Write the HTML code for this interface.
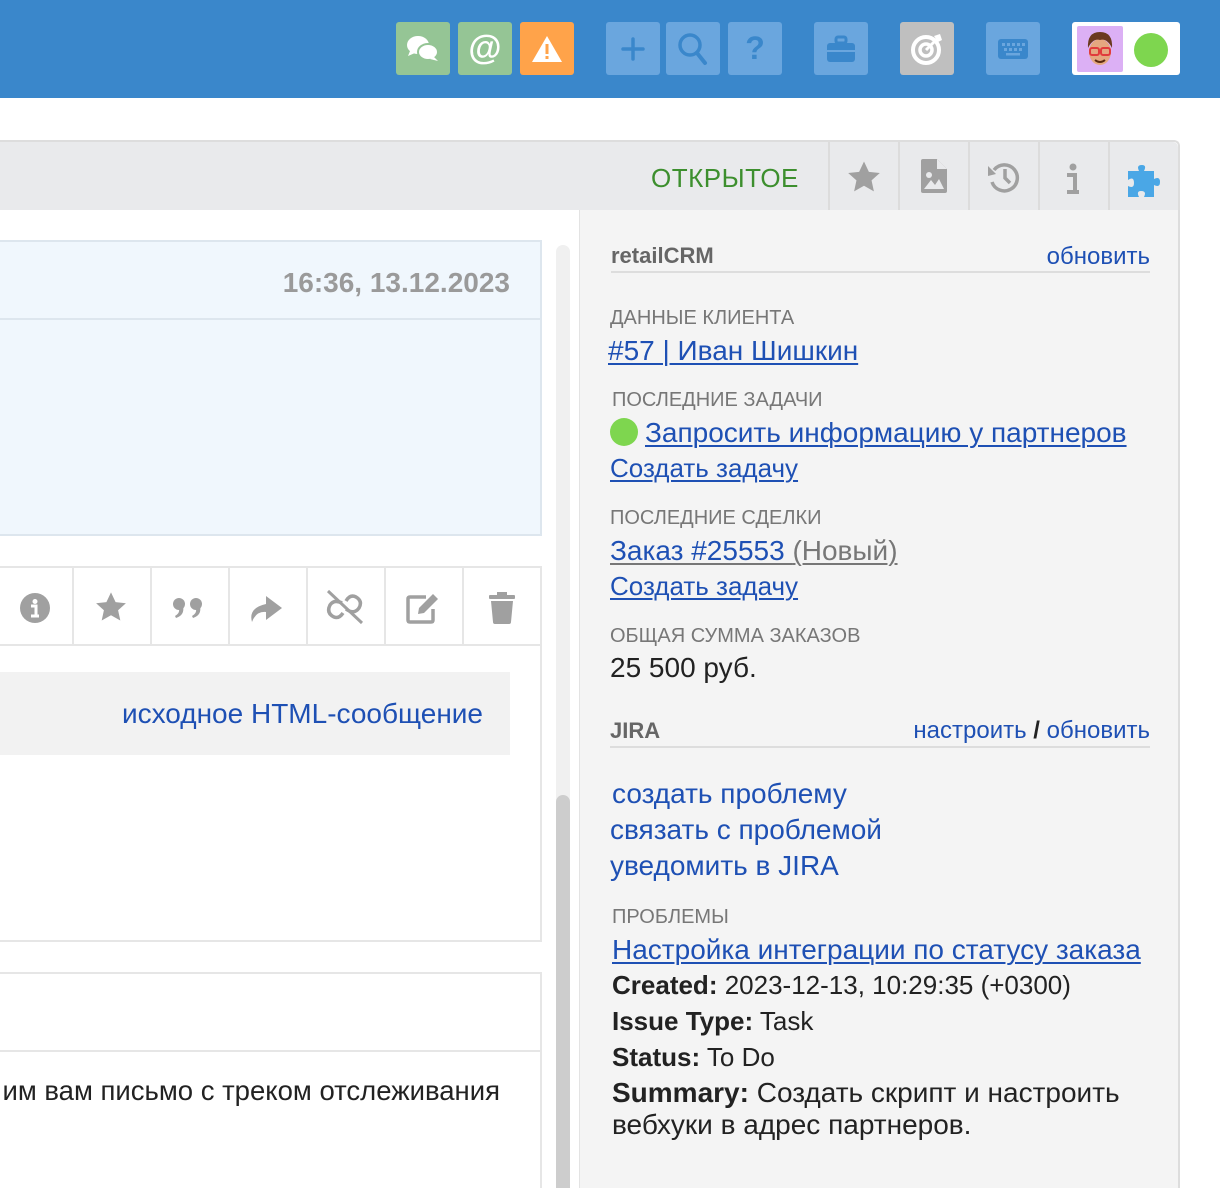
<!DOCTYPE html>
<html style="overflow:hidden;height:1188px"><head><meta charset="utf-8"><style>
*{margin:0;padding:0;box-sizing:border-box}
body{width:1220px;height:1188px;overflow:hidden;background:#fff;font-family:"Liberation Sans","Noto Sans CJK SC",sans-serif;position:relative}
.a{position:absolute;white-space:nowrap;line-height:1}
.top{position:absolute;left:0;top:0;width:1220px;height:98px;background:#3a87cb}
.btn{position:absolute;top:22px;height:53px;width:54px;border-radius:3px;display:flex;align-items:center;justify-content:center}
.lk{color:#1e50b4}
.u{text-decoration:underline;text-underline-offset:3px;text-decoration-thickness:2px}
.lbl{font-size:20px;color:#777}
.fs{font-size:28px}
.j{font-size:26px;color:#222}
</style></head><body>
<div class="top"></div>
<div class="btn" style="left:396px;background:#95c595"><svg width="34" height="30" viewBox="0 0 34 30"><ellipse cx="12" cy="11" rx="11" ry="9" fill="#fff"/><path d="M4 17 L2 22 L9 19Z" fill="#fff"/><ellipse cx="22" cy="18" rx="10" ry="8" fill="#fff" stroke="#95c595" stroke-width="2"/><path d="M28 23 L32 27 L24 25Z" fill="#fff"/></svg></div>
<div class="btn" style="left:458px;background:#95c595;color:#fff;font-size:34px;font-weight:bold">@</div>
<div class="btn" style="left:520px;background:#ffa34a"><svg width="34" height="30" viewBox="0 0 34 30"><path d="M17 2 L32 28 L2 28Z" fill="#fff"/><rect x="15.5" y="10" width="3" height="10" fill="#ffa34a"/><rect x="15.5" y="22" width="3" height="3" fill="#ffa34a"/></svg></div>
<div class="btn" style="left:606px;background:#6aa6de"><svg width="26" height="26"><path d="M13 3V23M3 13H23" stroke="#3a87cb" stroke-width="3.5" stroke-linecap="round"/></svg></div>
<div class="btn" style="left:666px;background:#6aa6de"><svg width="32" height="34"><circle cx="13" cy="13" r="10" fill="none" stroke="#3a87cb" stroke-width="3.5"/><path d="M20 21L28 31" stroke="#3a87cb" stroke-width="4" stroke-linecap="round"/></svg></div>
<div class="btn" style="left:728px;background:#6aa6de;color:#3a87cb;font-size:32px;font-weight:bold">?</div>
<div class="btn" style="left:814px;background:#6aa6de"><svg width="30" height="28"><rect x="10" y="2" width="10" height="6" rx="2" fill="none" stroke="#3a87cb" stroke-width="3"/><rect x="1" y="8" width="28" height="19" rx="3" fill="#3a87cb"/><rect x="1" y="15" width="28" height="2" fill="#6aa6de"/></svg></div>
<div class="btn" style="left:900px;background:#bfbfbf"><svg width="34" height="34"><circle cx="16" cy="18" r="13" fill="none" stroke="#fff" stroke-width="4"/><circle cx="16" cy="18" r="6" fill="none" stroke="#fff" stroke-width="3.5"/><path d="M16 18L28 6" stroke="#fff" stroke-width="3"/><path d="M24 4L30 2L32 8L28 10Z" fill="#fff"/></svg></div>
<div class="btn" style="left:986px;background:#6aa6de"><svg width="32" height="22"><rect x="1" y="1" width="30" height="20" rx="3" fill="#3a87cb"/><g fill="#6aa6de"><rect x="5" y="5" width="3" height="3"/><rect x="10" y="5" width="3" height="3"/><rect x="15" y="5" width="3" height="3"/><rect x="20" y="5" width="3" height="3"/><rect x="25" y="5" width="3" height="3"/><rect x="7" y="10" width="3" height="3"/><rect x="12" y="10" width="3" height="3"/><rect x="17" y="10" width="3" height="3"/><rect x="22" y="10" width="3" height="3"/><rect x="9" y="15" width="14" height="2.5"/></g></svg></div>
<div style="position:absolute;left:1072px;top:22px;width:108px;height:53px;background:#fff;border-radius:3px"></div>
<div style="position:absolute;left:1077px;top:26px;width:46px;height:46px;background:#dcb0f5;border-radius:2px"><svg width="46" height="46"><ellipse cx="23" cy="26" rx="11" ry="13" fill="#e5a880"/><path d="M11 22 Q10 6 23 6 Q36 6 35 22 Q30 12 23 14 Q16 12 11 22Z" fill="#6b3a1f"/><rect x="13" y="22" width="9" height="7" rx="2" fill="none" stroke="#e13c3c" stroke-width="2"/><rect x="24" y="22" width="9" height="7" rx="2" fill="none" stroke="#e13c3c" stroke-width="2"/><path d="M18 34 Q23 38 28 34" stroke="#5a2a10" stroke-width="2" fill="none"/></svg></div>
<div style="position:absolute;left:1134px;top:33px;width:34px;height:34px;border-radius:50%;background:#7ed64f"></div>

<!-- panel -->
<div style="position:absolute;left:-10px;top:140px;width:1190px;height:1048px;border:2px solid #ddd;border-bottom:none;border-radius:6px 6px 0 0;background:#fff"></div>
<div style="position:absolute;left:0;top:142px;width:1178px;height:68px;background:#e9eaec;border-top-right-radius:5px"></div>
<div class="a" style="left:651px;top:165px;font-size:26px;color:#3d8f2e;letter-spacing:.5px">ОТКРЫТОЕ</div>
<div style="position:absolute;left:828px;top:142px;width:2px;height:68px;background:#dcdcdc"></div>
<div style="position:absolute;left:898px;top:142px;width:2px;height:68px;background:#dcdcdc"></div>
<div style="position:absolute;left:968px;top:142px;width:2px;height:68px;background:#dcdcdc"></div>
<div style="position:absolute;left:1038px;top:142px;width:2px;height:68px;background:#dcdcdc"></div>
<div style="position:absolute;left:1108px;top:142px;width:2px;height:68px;background:#dcdcdc"></div>
<svg class="a" style="left:846px;top:160px" width="36" height="34" viewBox="0 0 24 23"><path d="M12 1l3.3 7 7.4.8-5.6 5 1.6 7.4L12 17.4 5.3 21.2l1.6-7.4-5.6-5 7.4-.8z" fill="#a0a0a0"/></svg>
<svg class="a" style="left:921px;top:159px" width="26" height="34" viewBox="0 0 26 34"><path d="M2 0H16L26 10V32Q26 34 24 34H2Q0 34 0 32V2Q0 0 2 0Z" fill="#a0a0a0"/><path d="M16 0V10H26" fill="#e9eaec"/><circle cx="8" cy="16" r="3" fill="#e9eaec"/><path d="M3 30L10 21L14 26L18 20L23 30Z" fill="#e9eaec"/></svg>
<svg class="a" style="left:986px;top:160px" width="36" height="34" viewBox="0 0 36 34"><path d="M8 10A13 13 0 1 1 6 22" fill="none" stroke="#a0a0a0" stroke-width="3.5"/><path d="M2 6L10 14L2 16Z" fill="#a0a0a0"/><path d="M19 9V18L24 23" stroke="#a0a0a0" stroke-width="3.5" fill="none"/></svg>
<svg class="a" style="left:1064px;top:163px" width="18" height="32"><circle cx="9" cy="4" r="3.5" fill="#a0a0a0"/><path d="M3 12H11V28M3 29H15" stroke="#a0a0a0" stroke-width="4" fill="none"/></svg>
<svg class="a" style="left:1126px;top:163px" width="38" height="36" viewBox="0 0 38 36"><path d="M2 8H13Q10 2 16 2Q21 2 18 8H28V16Q34 13 34 19Q34 25 28 22V34H18Q21 28 15 28Q10 28 13 34H2V23Q8 26 8 20Q8 13 2 17Z" fill="#4aa7e6"/></svg>

<!-- sidebar -->
<div style="position:absolute;left:579px;top:210px;width:599px;height:978px;background:#f4f4f4;border-left:1px solid #e3e3e3"></div>
<!-- left content -->
<div style="position:absolute;left:-2px;top:240px;width:544px;height:296px;background:#f0f7fd;border:2px solid #dde6ee"></div>
<div style="position:absolute;left:0;top:318px;width:540px;height:2px;background:#dde6ee"></div>
<div class="a fs" style="right:710px;top:269px;color:#9a9a9a;font-weight:bold">16:36, 13.12.2023</div>
<div style="position:absolute;left:-2px;top:566px;width:544px;height:376px;border:2px solid #e6e6e6;background:#fff"></div>
<div style="position:absolute;left:0;top:644px;width:540px;height:2px;background:#e6e6e6"></div>
<div style="position:absolute;left:72px;top:568px;width:2px;height:76px;background:#e6e6e6"></div>
<div style="position:absolute;left:150px;top:568px;width:2px;height:76px;background:#e6e6e6"></div>
<div style="position:absolute;left:228px;top:568px;width:2px;height:76px;background:#e6e6e6"></div>
<div style="position:absolute;left:306px;top:568px;width:2px;height:76px;background:#e6e6e6"></div>
<div style="position:absolute;left:384px;top:568px;width:2px;height:76px;background:#e6e6e6"></div>
<div style="position:absolute;left:462px;top:568px;width:2px;height:76px;background:#e6e6e6"></div>
<svg class="a" style="left:19px;top:592px" width="32" height="32"><circle cx="16" cy="16" r="15" fill="#a0a0a0"/><circle cx="16" cy="9.5" r="2.5" fill="#fff"/><path d="M12 14H17V23M12 24H20" stroke="#fff" stroke-width="3" fill="none"/></svg>
<svg class="a" style="left:94px;top:591px" width="34" height="32" viewBox="0 0 24 23"><path d="M12 1l3.3 7 7.4.8-5.6 5 1.6 7.4L12 17.4 5.3 21.2l1.6-7.4-5.6-5 7.4-.8z" fill="#a0a0a0"/></svg>
<svg class="a" style="left:172px;top:597px" width="32" height="22"><g fill="#a0a0a0"><circle cx="7" cy="7" r="6"/><path d="M11 9Q13 18 4 21L3 19Q8 16 7 12Z"/><circle cx="24" cy="7" r="6"/><path d="M28 9Q30 18 21 21L20 19Q25 16 24 12Z"/></g></svg>
<svg class="a" style="left:248px;top:592px" width="36" height="32"><path d="M4 30Q0 16 18 12V4L34 16L18 28V20Q8 19 4 30Z" fill="#a0a0a0"/></svg>
<svg class="a" style="left:324px;top:589px" width="42" height="36"><path d="M18 14Q10 10 6 16Q2 24 10 28Q15 30 19 24M22 20Q30 26 35 19Q39 12 32 8Q26 5 22 12" stroke="#a0a0a0" stroke-width="3.5" fill="none"/><path d="M4 2L38 34" stroke="#a0a0a0" stroke-width="3"/></svg>
<svg class="a" style="left:406px;top:592px" width="34" height="32"><path d="M20 5H4Q2 5 2 7V28Q2 30 4 30H25Q27 30 27 28V17" stroke="#a0a0a0" stroke-width="3.5" fill="none"/><path d="M12 22L13 16L27 2L32 7L18 21Z" fill="#a0a0a0"/></svg>
<svg class="a" style="left:487px;top:592px" width="30" height="32"><rect x="2" y="3" width="26" height="4" rx="1" fill="#a0a0a0"/><rect x="10" y="0" width="10" height="4" fill="#a0a0a0"/><path d="M4 9H26L24 30Q24 32 22 32H8Q6 32 6 30Z" fill="#a0a0a0"/></svg>
<div style="position:absolute;left:0;top:672px;width:510px;height:83px;background:#f2f2f2"></div>
<div class="a fs lk" style="right:737px;top:700px">исходное HTML-сообщение</div>
<div style="position:absolute;left:-2px;top:972px;width:544px;height:260px;border:2px solid #e6e6e6;background:#fff"></div>
<div style="position:absolute;left:0;top:1050px;width:540px;height:2px;background:#e6e6e6"></div>
<div class="a" style="right:720px;top:1077px;font-size:27.5px;color:#222">им вам письмо с треком отслеживания</div>
<div style="position:absolute;left:556px;top:245px;width:14px;height:960px;background:#f0f0f0;border-radius:7px"></div>
<div style="position:absolute;left:556px;top:795px;width:14px;height:420px;background:#cdcdcd;border-radius:7px"></div>

<!-- sidebar content -->
<div class="a" style="left:611px;top:245px;font-size:22px;font-weight:bold;color:#666">retailCRM</div>
<div class="a lk" style="right:70px;top:245px;font-size:24px">обновить</div>
<div style="position:absolute;left:611px;top:271px;width:539px;height:2px;background:#ddd"></div>
<div class="a lbl" style="left:610px;top:308px">ДАННЫЕ КЛИЕНТА</div>
<div class="a fs lk u" style="left:608px;top:337px">#57 | Иван Шишкин</div>
<div class="a lbl" style="left:612px;top:390px">ПОСЛЕДНИЕ ЗАДАЧИ</div>
<div style="position:absolute;left:610px;top:418px;width:28px;height:28px;border-radius:50%;background:#7ed64f"></div>
<div class="a fs lk u" style="left:645px;top:419px">Запросить информацию у партнеров</div>
<div class="a lk u" style="left:610px;top:455px;font-size:26px">Создать задачу</div>
<div class="a lbl" style="left:610px;top:508px">ПОСЛЕДНИЕ СДЕЛКИ</div>
<div class="a fs u" style="left:610px;top:537px;color:#777"><span class="lk">Заказ #25553 </span>(Новый)</div>
<div class="a lk u" style="left:610px;top:573px;font-size:26px">Создать задачу</div>
<div class="a lbl" style="left:610px;top:626px">ОБЩАЯ СУММА ЗАКАЗОВ</div>
<div class="a fs" style="left:610px;top:654px;color:#222">25 500 руб.</div>
<div class="a" style="left:610px;top:720px;font-size:22px;font-weight:bold;color:#666">JIRA</div>
<div class="a" style="right:70px;top:719px;font-size:24px;color:#222"><span class="lk">настроить</span> <b>/</b> <span class="lk">обновить</span></div>
<div style="position:absolute;left:610px;top:746px;width:540px;height:2px;background:#ddd"></div>
<div class="a fs lk" style="left:612px;top:780px">создать проблему</div>
<div class="a fs lk" style="left:610px;top:816px">связать с проблемой</div>
<div class="a fs lk" style="left:610px;top:852px">уведомить в JIRA</div>
<div class="a lbl" style="left:612px;top:907px">ПРОБЛЕМЫ</div>
<div class="a fs lk u" style="left:612px;top:936px">Настройка интеграции по статусу заказа</div>
<div class="a j" style="left:612px;top:972px"><b>Created:</b> 2023-12-13, 10:29:35 (+0300)</div>
<div class="a j" style="left:612px;top:1008px"><b>Issue Type:</b> Task</div>
<div class="a j" style="left:612px;top:1044px"><b>Status:</b> To Do</div>
<div class="a j" style="left:612px;top:1079px;font-size:28px"><b>Summary:</b> Создать скрипт и настроить</div>
<div class="a j" style="left:612px;top:1111px;font-size:28px">вебхуки в адрес партнеров.</div>
</body></html>
